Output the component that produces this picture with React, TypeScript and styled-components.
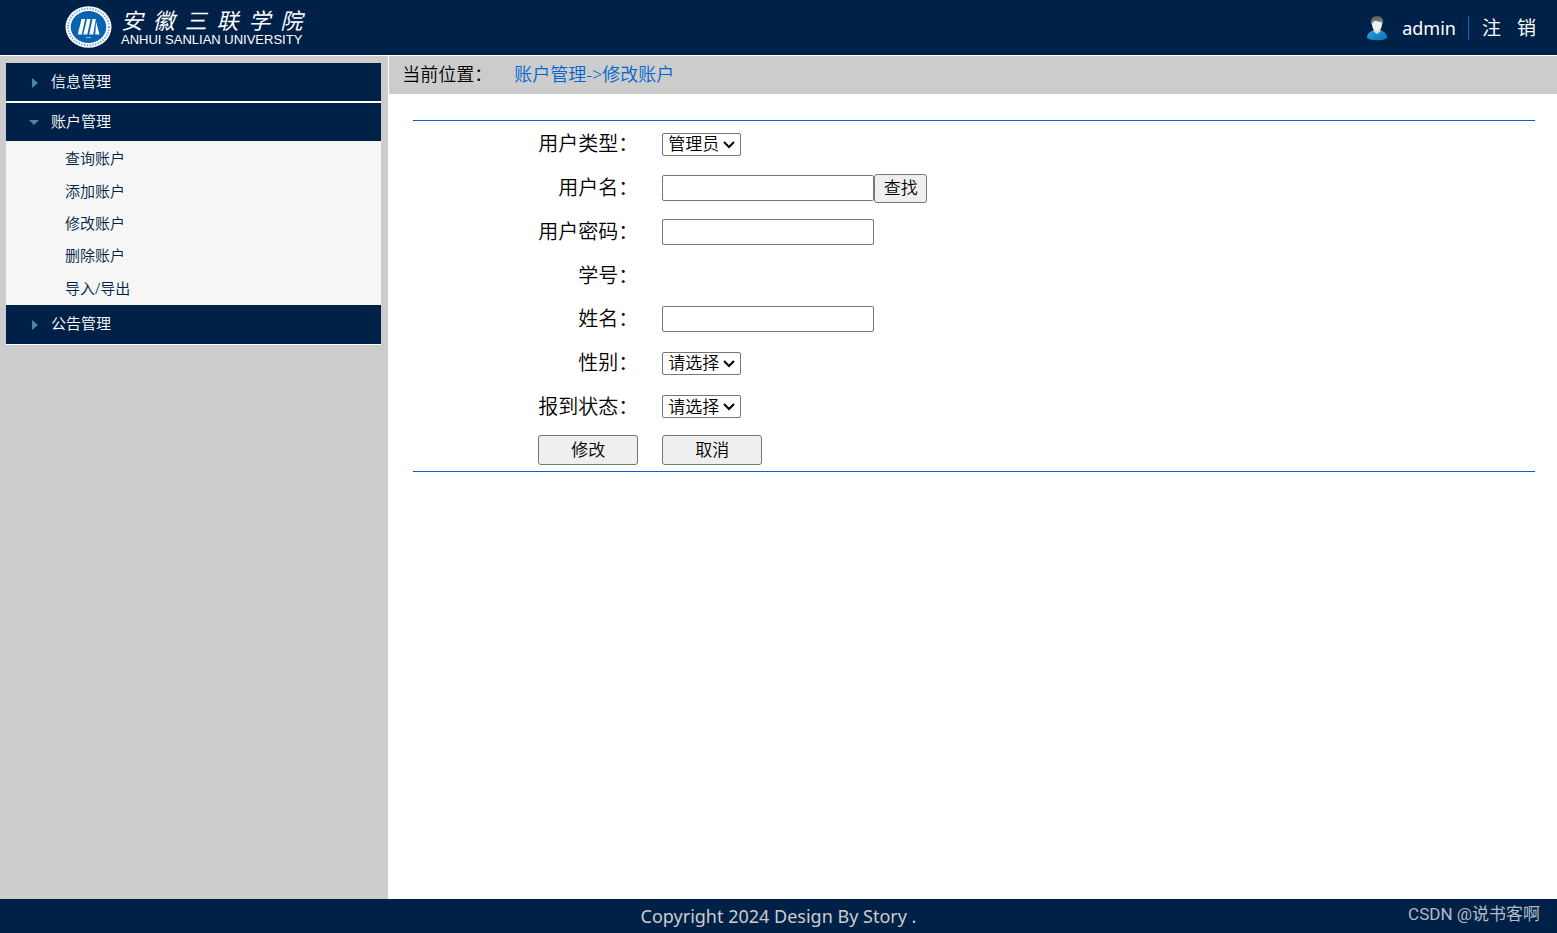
import React from 'react';
import styled, { createGlobalStyle } from 'styled-components';

const NAVY = '#002147';
const GREY = '#cccccc';
const BLUE = '#0066cc';

const GlobalStyle = createGlobalStyle`
  * { box-sizing: border-box; }
  body {
    margin: 0;
    font-family: "Noto Sans", "Noto Sans CJK SC", sans-serif;
    color: #000;
    background: #fff;
  }
  button, input, select { font-family: inherit; }
`;

const Page = styled.div`
  min-height: 100vh;
  display: grid;
  grid-template-rows: 56px 1fr 34px;
`;

const Header = styled.header`
  display: flex;
  justify-content: space-between;
  align-items: center;
  padding: 0 21px 0 65px;
  background: ${NAVY};
  border-bottom: 1px solid #fff;
`;

const Brand = styled.a`
  display: flex;
  align-items: center;
  gap: 9px;
  padding-bottom: 2px;
  color: #fff;
  text-decoration: none;
`;

const BrandText = styled.div`
  display: flex;
  flex-direction: column;
`;

const BrandName = styled.div`
  display: flex;
  justify-content: space-between;
  font: italic 400 22px/26px "Noto Sans CJK SC", sans-serif;
`;

const BrandLatin = styled.div`
  font: 13px/15px "Liberation Sans", sans-serif;
  white-space: nowrap;
`;

const UserBar = styled.div`
  display: flex;
  align-items: center;
  gap: 12px;
  color: #fff;
  line-height: 24px;
`;

const UserName = styled.span`
  display: flex;
  align-items: center;
  gap: 14px;
  font-size: 18px;
`;

const LogoutLink = styled.a`
  display: flex;
  gap: 16px;
  padding-left: 13px;
  border-left: 1px solid ${BLUE};
  color: #fff;
  font-size: 19px;
  text-decoration: none;
`;

const Body = styled.div`
  display: grid;
  grid-template-columns: 25% 1fr;
`;

const Sidebar = styled.aside`
  padding: 7px 7px 0 6px;
  background: ${GREY};
  border-right: 1px solid #fff;
`;

const MenuHeading = styled.button<{ $rule: number }>`
  display: flex;
  align-items: center;
  width: 100%;
  height: ${p => (p.$rule ? 40 : 38)}px;
  padding: 0 0 1px 22px;
  gap: 11px;
  border: 0;
  border-bottom: ${p => p.$rule}px solid #fff;
  background: ${NAVY};
  color: #fff;
  font-size: 15px;
  font-weight: 350;
  line-height: 20px;
`;

const MenuText = styled.span`
  padding-bottom: 2px;
`;

const SubMenu = styled.ul`
  display: grid;
  grid-auto-rows: 1fr;
  align-items: center;
  min-height: 164px;
  margin: 0;
  padding: 1px 0 1px 59px;
  list-style: none;
  background: #f6f6f6;
  font-size: 15px;
  font-weight: 350;
  line-height: 20px;
`;

const SubLink = styled.a`
  color: ${NAVY};
  text-decoration: none;
`;

const Breadcrumb = styled.nav`
  display: flex;
  align-items: center;
  gap: 22px;
  height: 38px;
  padding: 0 0 4px 13px;
  background: ${GREY};
  font-size: 18px;
  font-weight: 350;
`;

const CrumbLink = styled.a`
  color: ${BLUE};
  text-decoration: none;
`;

const Form = styled.form`
  display: grid;
  grid-template-columns: 225px 1fr;
  grid-auto-rows: 1fr;
  column-gap: 24px;
  align-items: center;
  min-height: 352px;
  margin: 26px 22px 0 24px;
  border: solid ${BLUE};
  border-width: 1px 0;
`;

const Label = styled.label`
  justify-self: end;
  padding-top: 3px;
  font-size: 20px;
  font-weight: 350;
  line-height: 28px;
`;

const Field = styled.div`
  display: flex;
  align-items: center;
  padding-top: 3px;
`;

const TextInput = styled.input`
  width: 212px;
  height: 26px;
  border: 1px solid #767676;
  border-radius: 2px;
  font-size: 17px;
`;

const SelectBox = styled.div`
  position: relative;
  display: flex;
`;

const Select = styled.select`
  appearance: none;
  width: 79px;
  height: 23px;
  padding: 0 0 0 5px;
  border: 1px solid #767676;
  border-radius: 2px;
  background: #fff;
  color: #000;
  font-size: 17px;
  font-weight: 350;
  line-height: 20px;
`;

const Chevron = styled.svg`
  position: absolute;
  right: 5px;
  top: 7px;
  pointer-events: none;
`;

const Button = styled.button<{ $wide?: boolean }>`
  width: ${p => (p.$wide ? 100 : 53)}px;
  height: ${p => (p.$wide ? 30 : 29)}px;
  padding: 0;
  border: 1px solid #767676;
  border-radius: 3px;
  background: #efefef;
  color: #000;
  font-size: 17px;
  font-weight: 350;
  line-height: 24px;
`;

const Actions = styled.div<{ $end?: boolean }>`
  display: flex;
  justify-content: ${p => (p.$end ? 'flex-end' : 'flex-start')};
  padding-top: 2px;
`;

const Footer = styled.footer`
  position: relative;
  display: flex;
  align-items: center;
  justify-content: center;
  background: ${NAVY};
  color: ${GREY};
  font-size: 18px;
`;

const Credit = styled.span`
  position: absolute;
  right: 17px;
  top: 3px;
  color: #b4bac2;
  font: 17px/24px Roboto, "Noto Sans CJK SC", sans-serif;
`;

const Emblem = () => (
  <svg width="47" height="42" viewBox="0 0 47 42" aria-hidden="true">
    <ellipse cx="23.5" cy="21" rx="23" ry="20.8" fill="#fff" />
    <ellipse cx="23.5" cy="21" rx="20.5" ry="18.4" fill="none" stroke="#6fa3d0" strokeWidth="2" strokeDasharray="1.3 1.5" />
    <ellipse cx="23.5" cy="21" rx="17.8" ry="16" fill="#0a63b0" />
    <path d="M16.500 13h3.600l-3.300 15.500h-4zM22 13h3.600l-3.300 15.500h-4zM27.500 13h3.300l-2.600 15.500h-4zM31 15.500l3.500 13h-4.200z" fill="#fff" />
    <path d="M21 31.500h5" stroke="#8fbce0" strokeWidth="1" />
  </svg>
);

const Avatar = () => (
  <svg width="22" height="26" viewBox="0 0 22 26" aria-hidden="true">
    <defs>
      <linearGradient id="shirt" x1="0" y1="0" x2="1" y2="1">
        <stop offset="0" stopColor="#2aa0e0" />
        <stop offset="1" stopColor="#0b6fb8" />
      </linearGradient>
      <linearGradient id="hair" x1="0" y1="0" x2="0" y2="1">
        <stop offset="0" stopColor="#555" />
        <stop offset="1" stopColor="#999" />
      </linearGradient>
    </defs>
    <path d="M1 23c0-4 2-6 6-7.500h8c4 1.500 6 3.500 6 7.500-3 3-17 3-20 0z" fill="url(#shirt)" />
    <path d="M7.500 13h7v3.500L11 19l-3.500-2.500z" fill="#d8d8d8" />
    <ellipse cx="11" cy="9.500" rx="5" ry="6.500" fill="#f0f0f0" />
    <path d="M5.500 10C4 4 6.500 1 11 1s7.500 3 5.500 9l-1-3.500c-3 .5-5-.2-6.500-1C8 7 6.500 7 5.500 10z" fill="url(#hair)" />
  </svg>
);

const Arrow = ({ open }: { open?: boolean }) => (
  <svg width="12" height="12" viewBox="0 0 12 12" aria-hidden="true">
    <path d={open ? 'M1 4h10L6 9z' : 'M4 2v10l6-5z'} fill="#4a86a8" />
  </svg>
);

const accountLinks = ['查询账户', '添加账户', '修改账户', '删除账户', '导入/导出'];

const DropDown = ({ id, value }: { id: string; value: string }) => (
  <SelectBox>
    <Select id={id}><option>{value}</option></Select>
    <Chevron width="14" height="10" viewBox="0 0 14 10" aria-hidden="true">
      <path d="M2 2l5 5 5-5" fill="none" stroke="#000" strokeWidth="2" />
    </Chevron>
  </SelectBox>
);

export default function App() {
  return (
    <Page>
      <GlobalStyle />
      <Header>
        <Brand href="#">
          <Emblem />
          <BrandText>
            <BrandName>{[...'安徽三联学院'].map(c => <span key={c}>{c}</span>)}</BrandName>
            <BrandLatin>ANHUI SANLIAN UNIVERSITY</BrandLatin>
          </BrandText>
        </Brand>
        <UserBar>
          <UserName><Avatar />admin</UserName>
          <LogoutLink href="#"><span>注</span><span>销</span></LogoutLink>
        </UserBar>
      </Header>
      <Body>
        <Sidebar>
          <MenuHeading type="button" $rule={2}><Arrow /><MenuText>信息管理</MenuText></MenuHeading>
          <MenuHeading type="button" $rule={0}><Arrow open /><MenuText>账户管理</MenuText></MenuHeading>
          <SubMenu>
            {accountLinks.map(text => <li key={text}><SubLink href="#">{text}</SubLink></li>)}
          </SubMenu>
          <MenuHeading type="button" $rule={1}><Arrow /><MenuText>公告管理</MenuText></MenuHeading>
        </Sidebar>
        <main>
          <Breadcrumb>
            <span>当前位置：</span>
            <CrumbLink href="#">账户管理-&gt;修改账户</CrumbLink>
          </Breadcrumb>
          <Form onSubmit={e => e.preventDefault()}>
            <Label htmlFor="type">用户类型：</Label>
            <Field><DropDown id="type" value="管理员" /></Field>
            <Label htmlFor="user">用户名：</Label>
            <Field><TextInput id="user" /><Button type="button">查找</Button></Field>
            <Label htmlFor="password">用户密码：</Label>
            <Field><TextInput id="password" type="password" /></Field>
            <Label htmlFor="number">学号：</Label>
            <Field><output id="number" /></Field>
            <Label htmlFor="name">姓名：</Label>
            <Field><TextInput id="name" /></Field>
            <Label htmlFor="gender">性别：</Label>
            <Field><DropDown id="gender" value="请选择" /></Field>
            <Label htmlFor="status">报到状态：</Label>
            <Field><DropDown id="status" value="请选择" /></Field>
            <Actions $end><Button $wide>修改</Button></Actions>
            <Actions><Button $wide type="reset">取消</Button></Actions>
          </Form>
        </main>
      </Body>
      <Footer>
        Copyright 2024 Design By Story .
        <Credit>CSDN @说书客啊</Credit>
      </Footer>
    </Page>
  );
}
